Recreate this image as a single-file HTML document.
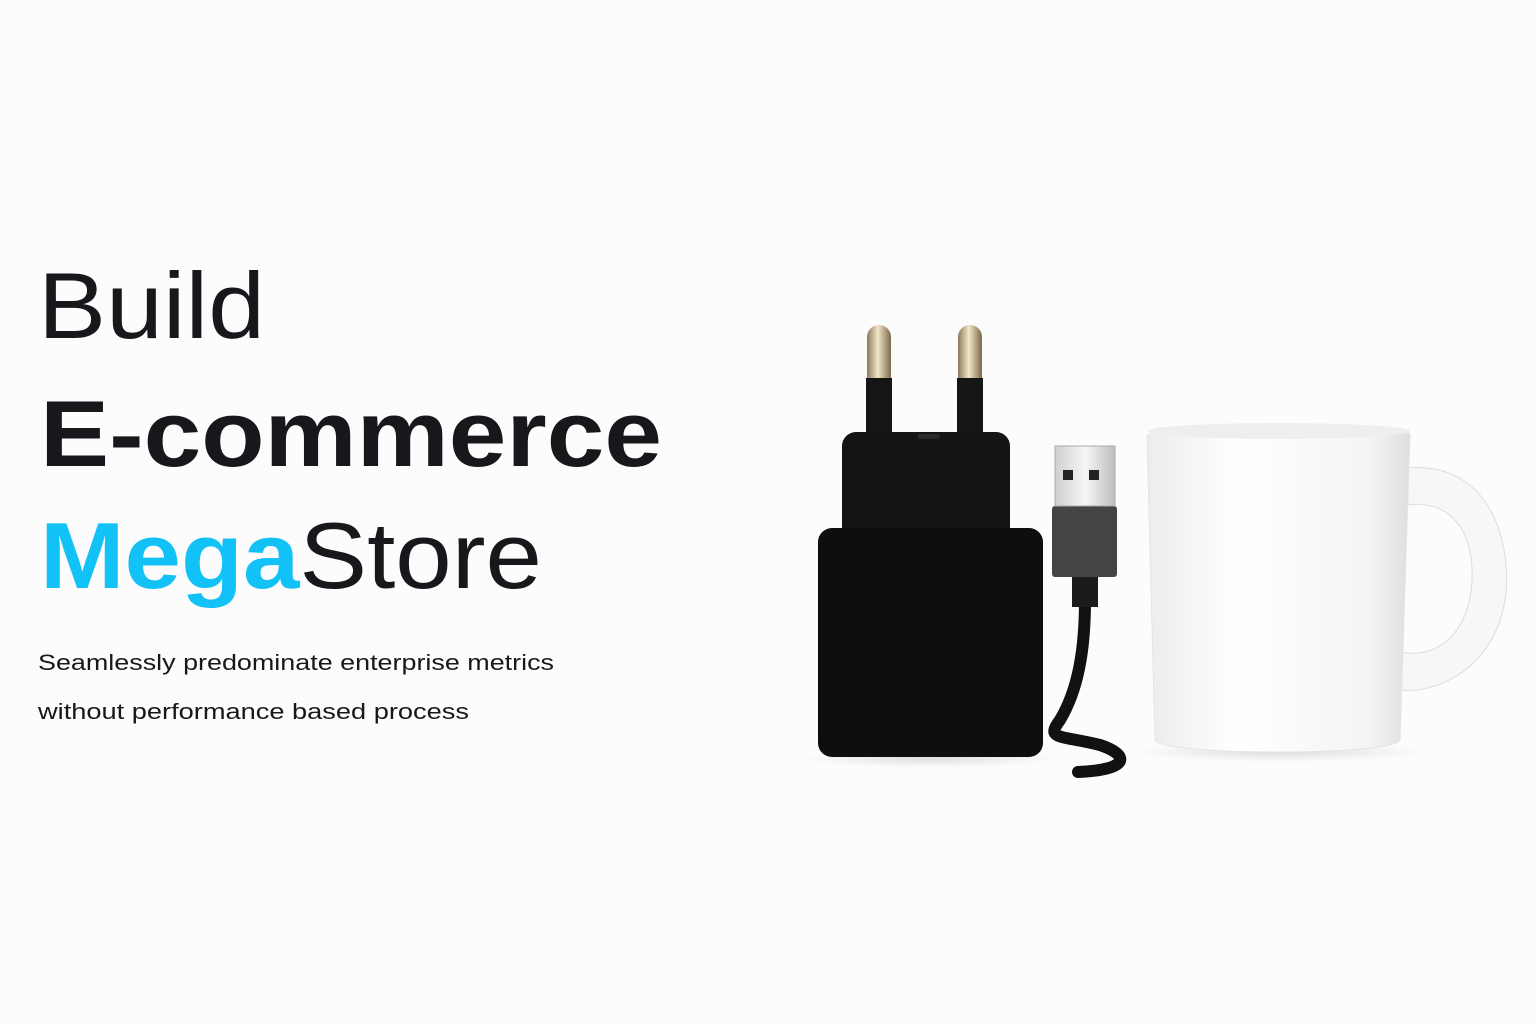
<!DOCTYPE html>
<html><head><meta charset="utf-8"><style>
html,body{margin:0;padding:0;background:#fcfcfc;}
svg{display:block}
</style></head><body>
<svg width="1536" height="1024" viewBox="0 0 1536 1024" xmlns="http://www.w3.org/2000/svg">
<defs>
<linearGradient id="gold" x1="0" x2="1"><stop offset="0" stop-color="#8a7a5a"/><stop offset=".45" stop-color="#f2e6c8"/><stop offset="1" stop-color="#7a6a4a"/></linearGradient>
<linearGradient id="mug" x1="0" x2="1"><stop offset="0" stop-color="#ececec"/><stop offset=".35" stop-color="#ffffff"/><stop offset=".85" stop-color="#f4f4f4"/><stop offset="1" stop-color="#dedede"/></linearGradient>
<linearGradient id="metal" x1="0" x2="1"><stop offset="0" stop-color="#cfcfcf"/><stop offset=".5" stop-color="#f7f7f7"/><stop offset="1" stop-color="#bdbdbd"/></linearGradient>
<radialGradient id="sh" cx=".5" cy=".5" r=".5"><stop offset="0" stop-color="#000" stop-opacity=".12"/><stop offset="1" stop-color="#000" stop-opacity="0"/></radialGradient>
</defs>
<rect width="1536" height="1024" fill="#fcfcfc"/>
<g font-family="'Liberation Sans',sans-serif" fill="#17181c">
<text x="38" y="338" font-size="94" textLength="227" lengthAdjust="spacingAndGlyphs">Build</text>
<text x="40" y="466" font-size="94" font-weight="bold" textLength="622" lengthAdjust="spacingAndGlyphs">E-commerce</text>
<text x="40" y="588" font-size="94" textLength="502" lengthAdjust="spacingAndGlyphs"><tspan font-weight="bold" fill="#12c2f7">Mega</tspan><tspan>Store</tspan></text>
<text x="38" y="670" font-size="22" textLength="516" lengthAdjust="spacingAndGlyphs">Seamlessly predominate enterprise metrics</text>
<text x="38" y="719" font-size="22" textLength="431" lengthAdjust="spacingAndGlyphs">without performance based process</text>
</g>
<ellipse cx="930" cy="758" rx="130" ry="10" fill="url(#sh)"/>
<ellipse cx="1280" cy="752" rx="150" ry="10" fill="url(#sh)"/>
<rect x="866" y="378" width="26" height="62" fill="#151515"/>
<rect x="957" y="378" width="26" height="62" fill="#151515"/>
<path d="M867 378 V337 a12 12 0 0 1 24 0 V378 Z" fill="url(#gold)"/>
<path d="M958 378 V337 a12 12 0 0 1 24 0 V378 Z" fill="url(#gold)"/>
<rect x="842" y="432" width="168" height="118" rx="14" fill="#141414"/>
<rect x="918" y="434" width="22" height="5" rx="2" fill="#2a2a2a"/>
<rect x="818" y="528" width="225" height="229" rx="14" fill="#0e0e0e"/>
<path d="M1085 600 C1085 650 1078 690 1060 720 C1045 740 1060 735 1100 745 C1130 755 1130 770 1078 772" fill="none" stroke="#111" stroke-width="12" stroke-linecap="round"/>
<rect x="1072" y="575" width="26" height="32" fill="#1b1b1b"/>
<rect x="1052" y="506" width="65" height="71" rx="3" fill="#444"/>
<rect x="1055" y="446" width="60" height="60" fill="url(#metal)" stroke="#aaa"/>
<rect x="1063" y="470" width="10" height="10" fill="#222"/>
<rect x="1089" y="470" width="10" height="10" fill="#222"/>
<path d="M1406 468 C1500 460 1512 560 1505 600 C1495 665 1440 695 1398 690 L1400 652 C1440 660 1470 630 1472 580 C1474 530 1450 500 1408 505 Z" fill="#f7f7f7" stroke="#dcdcdc"/>
<path d="M1147 436 C1150 422 1405 422 1410 434 L1400 740 C1395 756 1160 756 1155 740 Z" fill="url(#mug)" stroke="#e4e4e4"/>
<ellipse cx="1279" cy="431" rx="131" ry="8" fill="#eeeeee"/>
</svg>
</body></html>
